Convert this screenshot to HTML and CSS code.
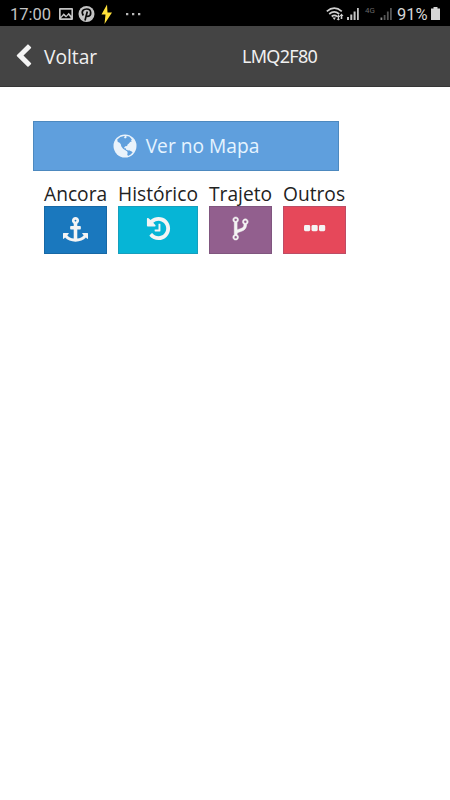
FILE: index.html
```html
<!DOCTYPE html>
<html lang="pt-BR">
  <head>
    <meta charset="utf-8" />
    <meta name="viewport" content="width=device-width, initial-scale=1" />
    <title>LMQ2F80</title>
    <link rel="stylesheet" href="styles.css">
  </head>
  <body>
    <div class="status">
      <span class="clock">17:00</span>
      <svg class="status-left" width="84" height="26" viewBox="57 0 84 26">
        <path fill="#c4c4c4" fill-rule="evenodd" d="M60 8h12q1 0 1 1v10q0 1-1 1H60q-1 0-1-1V9q0-1 1-1zm.7 1.700v7l3-3.500 2.500 2.500 2.500-3 2.700 3V9.700zM61 18.200h10l-2.500-3.200-2.500 2.500-2.300-2z" />
        <circle cx="86.500" cy="14" r="8" fill="#c4c4c4" />
        <path fill="none" stroke="#080808" stroke-width="1.700" d="M83.300 15.500c-3-5 1-6.500 3.500-6.500 5 0 5 7 1 7.300-1.500 0-2-1-2-1M87.300 11.500l-2.300 9" />
        <path fill="#ffe13a" d="M107 4.500l-5.500 10h4l-1 9.500 7.500-11.500h-4.500z" />
        <path fill="#b8b8b8" d="M126 13h2.300v2.300H126zM132 13h2.300v2.300H132zM138 13h2.300v2.300H138z" />
      </svg>
      <svg class="status-right" width="72" height="26" viewBox="325 0 72 26">
        <g fill="none" stroke="#cfcfcf" stroke-width="1.700">
          <path d="M326.800 11.300q7.500-6.500 15 0M329.200 14q5-4.300 10 0M331.700 16.500q2.700-2.300 5.300 0" />
        </g>
        <path fill="#cfcfcf" d="M332.500 17.500h3.500l-1.700 2.500zM338.500 14.500l-2 2.500h1.200v2h-1.200l1.800 1.500 1.800-1.500h-1v-2h1.200zM341.500 13.500l-2 2.500h1.200v3h1.600v-3h1.200z" />
        <path fill="#c4c4c4" d="M347 17h2v3h-2zM350.300 14.500h2V20h-2zM353.600 11.500h2V20h-2zM357 8h1.800v12H357z" />
        <path fill="#8a8a8a" d="M380.500 17.500h1.800V20h-1.800z" />
        <path fill="#555" d="M383.700 15h1.800v5h-1.800zM386.900 11.500h1.800V20h-1.800zM390 8h1.800v12H390z" />
        <text class="network" x="365" y="13">4G</text>
      </svg>
      <span class="battery">91%</span>
      <svg class="battery-icon" width="9" height="26" viewBox="0 0 9 26">
        <path fill="#d6d6d6" d="M2.500 7h4v1.500H9V20H0V8.500h2.500z" />
      </svg>
    </div>

    <div class="navbar">
      <a class="back">
        <svg class="icon" viewBox="0 0 1792 1792"><path d="M1427 301l-531 531 531 531q19 19 19 45t-19 45l-166 166q-19 19-45 19t-45-19l-742-742q-19-19-19-45t19-45l742-742q19-19 45-19t45 19l166 166q19 19 19 45t-19 45z" /></svg>
        <span>Voltar</span>
      </a>
      <span class="title">LMQ2F80</span>
    </div>

    <div class="content">
      <a class="btn-map">
        <svg class="globe" viewBox="0 0 24 24">
          <circle cx="12" cy="12" r="11.500" />
          <path class="land" d="M4.200 5.500Q7 2.300 11 2l1 .8-1.300.9 1.600.8 1.500-1.200-.6-1.300 3 .5 1.500 1.500 1.200 1.800-1 .4 1 1-1.800.8-1.200 1.500-1.300 1-.5 1.500-1.800.2-1.200 1.200.6 1.200 1.200-.4.200 1.500 1.600.4-.3 1.400-2-1.200-2.300-1.500-1.700-2.300-.7-2.500-1.400-1.500-1.500-.5zM14 17l2-.8 2.700 1.300 1 .8-2 2.200-2.700 1.600-.8-1.800.5-1.300z" />
        </svg>
        <span>Ver no Mapa</span>
      </a>

      <div class="actions">
        <div class="action">
          <label>Ancora</label>
          <a class="btn anchor">
            <svg class="icon" viewBox="0 0 1792 1792"><path d="M960 256q0-26-19-45t-45-19-45 19-19 45 19 45 45 19 45-19 19-45zm832 928v352q0 22-20 30-8 2-12 2-12 0-23-9l-93-93q-119 143-318.500 226.500t-429.500 83.500-429.500-83.500-318.500-226.500l-93 93q-9 9-23 9-4 0-12-2-20-8-20-30v-352q0-14 9-23t23-9h352q22 0 30 20 8 19-7 35l-100 100q67 91 189.500 153.500t271.500 82.500v-647h-192q-26 0-45-19t-19-45v-128q0-26 19-45t45-19h192v-163q-58-34-93-92.500t-35-128.500q0-106 75-181t181-75 181 75 75 181q0 70-35 128.500t-93 92.500v163h192q26 0 45 19t19 45v128q0 26-19 45t-45 19h-192v647q149-20 271.500-82.500t189.500-153.500l-100-100q-15-16-7-35 8-20 30-20h352q14 0 23 9t9 23z" /></svg>
          </a>
        </div>
        <div class="action wide">
          <label>Histórico</label>
          <a class="btn history">
            <svg class="icon" viewBox="0 0 1792 1792"><path d="M1664 896q0 156-61 298t-164 245-245 164-298 61q-172 0-327-72.500t-264-204.500q-7-10-6.500-22.500t8.500-20.500l137-138q10-9 25-9 16 2 23 12 73 95 179 147t225 52q104 0 198.500-40.500t163.500-109.500 109.500-163.500 40.500-198.500-40.500-198.500-109.500-163.500-163.500-109.500-198.500-40.500q-98 0-188 35.500t-160 101.500l137 138q31 30 14 69-17 40-59 40h-448q-26 0-45-19t-19-45v-448q0-42 40-59 39-17 69 14l130 129q107-101 244.500-156.500t284.500-55.500q156 0 298 61t245 164 164 245 61 298zm-640-288v448q0 14-9 23t-23 9h-320q-14 0-23-9t-9-23v-64q0-14 9-23t23-9h224v-352q0-14 9-23t23-9h64q14 0 23 9t9 23z" /></svg>
          </a>
        </div>
        <div class="action">
          <label>Trajeto</label>
          <a class="btn route">
            <svg class="icon" viewBox="0 0 1792 1792"><path d="M672 1472q0-40-28-68t-68-28-68 28-28 68 28 68 68 28 68-28 28-68zm0-1152q0-40-28-68t-68-28-68 28-28 68 28 68 68 28 68-28 28-68zm640 128q0-40-28-68t-68-28-68 28-28 68 28 68 68 28 68-28 28-68zm96 0q0 52-26 96.500t-70 69.500q-2 287-226 414-67 38-203 81-128 40-169.500 71t-41.500 100v26q44 25 70 69.500t26 96.500q0 80-56 136t-136 56-136-56-56-136q0-52 26-96.500t70-69.500v-820q-44-25-70-69.500t-26-96.500q0-80 56-136t136-56 136 56 56 136q0 52-26 96.500t-70 69.500v497q54-26 154-57 55-17 87.500-29.500t70.500-31 59-39.500 40.500-51 28-69.500 8.500-91.500q-44-25-70-69.500t-26-96.500q0-80 56-136t136-56 136 56 56 136z" /></svg>
          </a>
        </div>
        <div class="action">
          <label>Outros</label>
          <a class="btn more">
            <svg class="icon" viewBox="0 0 27 27"><rect x="3" y="10" width="6.200" height="6.200" rx="1.400" /><rect x="10.500" y="10" width="6.200" height="6.200" rx="1.400" /><rect x="18" y="10" width="6.200" height="6.200" rx="1.400" /></svg>
          </a>
        </div>
      </div>
    </div>
  </body>
</html>
```

FILE: styles.css
```css
* {
  box-sizing: border-box;
}
body {
  margin: 0;
  background: #fff;
  color: #222;
  font-family: "Open Sans", "Noto Sans", sans-serif;
  font-size: 19.2px;
}
svg {
  display: block;
  flex: none;
}
.status {
  display: flex;
  align-items: center;
  height: 26px;
  padding: 0 10px;
  background: #000;
  color: #c4c4c4;
  font-family: Roboto, sans-serif;
  font-size: 16.5px;
}
.clock {
  width: 47px;
  padding-top: 2px;
}
.status-right {
  margin-left: auto;
}
.network {
  fill: #666;
  font-size: 8px;
}
.battery {
  width: 34px;
  padding-top: 2px;
  color: #d6d6d6;
}
.navbar {
  display: flex;
  align-items: center;
  height: 61px;
  padding: 0 10px 0 11px;
  background: #444;
  border-bottom: 1px solid #363636;
  color: #f0f0f0;
}
.back {
  display: flex;
  align-items: center;
  gap: 8px;
  width: 231px;
}
.back .icon {
  width: 25px;
  height: 25px;
}
.title {
  font-family: "Noto Sans", sans-serif;
  font-size: 18px;
  letter-spacing: -0.7px;
}
.icon {
  width: 27px;
  height: 27px;
  fill: #f4f4f4;
}
.content {
  padding: 34px 33px;
}
.btn-map {
  display: flex;
  align-items: center;
  justify-content: center;
  gap: 9px;
  width: 306px;
  height: 50px;
  padding-bottom: 1px;
  background: #5f9fdd;
  border: 1px solid #4d89bf;
  color: #e6f4ff;
}
.globe {
  width: 24px;
  height: 24px;
  fill: #eaf3fb;
}
.globe .land {
  fill: #5f9fdd;
}
.actions {
  display: flex;
  gap: 11px;
  padding: 10px 0 0 11px;
}
.action {
  width: 63px;
  white-space: nowrap;
}
.action.wide {
  width: 80px;
}
.action label {
  display: block;
  height: 25px;
  line-height: 25px;
}
.btn {
  display: flex;
  justify-content: center;
  height: 48px;
  padding-top: 8px;
  border: 1px solid;
}
.btn.anchor {
  background: #1a78be;
  border-color: #1768a5;
}
.anchor .icon {
  width: 25px;
  height: 25px;
  margin-top: 2px;
}
.btn.history {
  background: #06b5d6;
  border-color: #169fbd;
}
.btn.route {
  background: #925f8e;
  border-color: #80567f;
}
.route .icon {
  stroke: #f4f4f4;
  stroke-width: 30;
}
.btn.more {
  background: #e6485a;
  border-color: #bd4c65;
}
```
